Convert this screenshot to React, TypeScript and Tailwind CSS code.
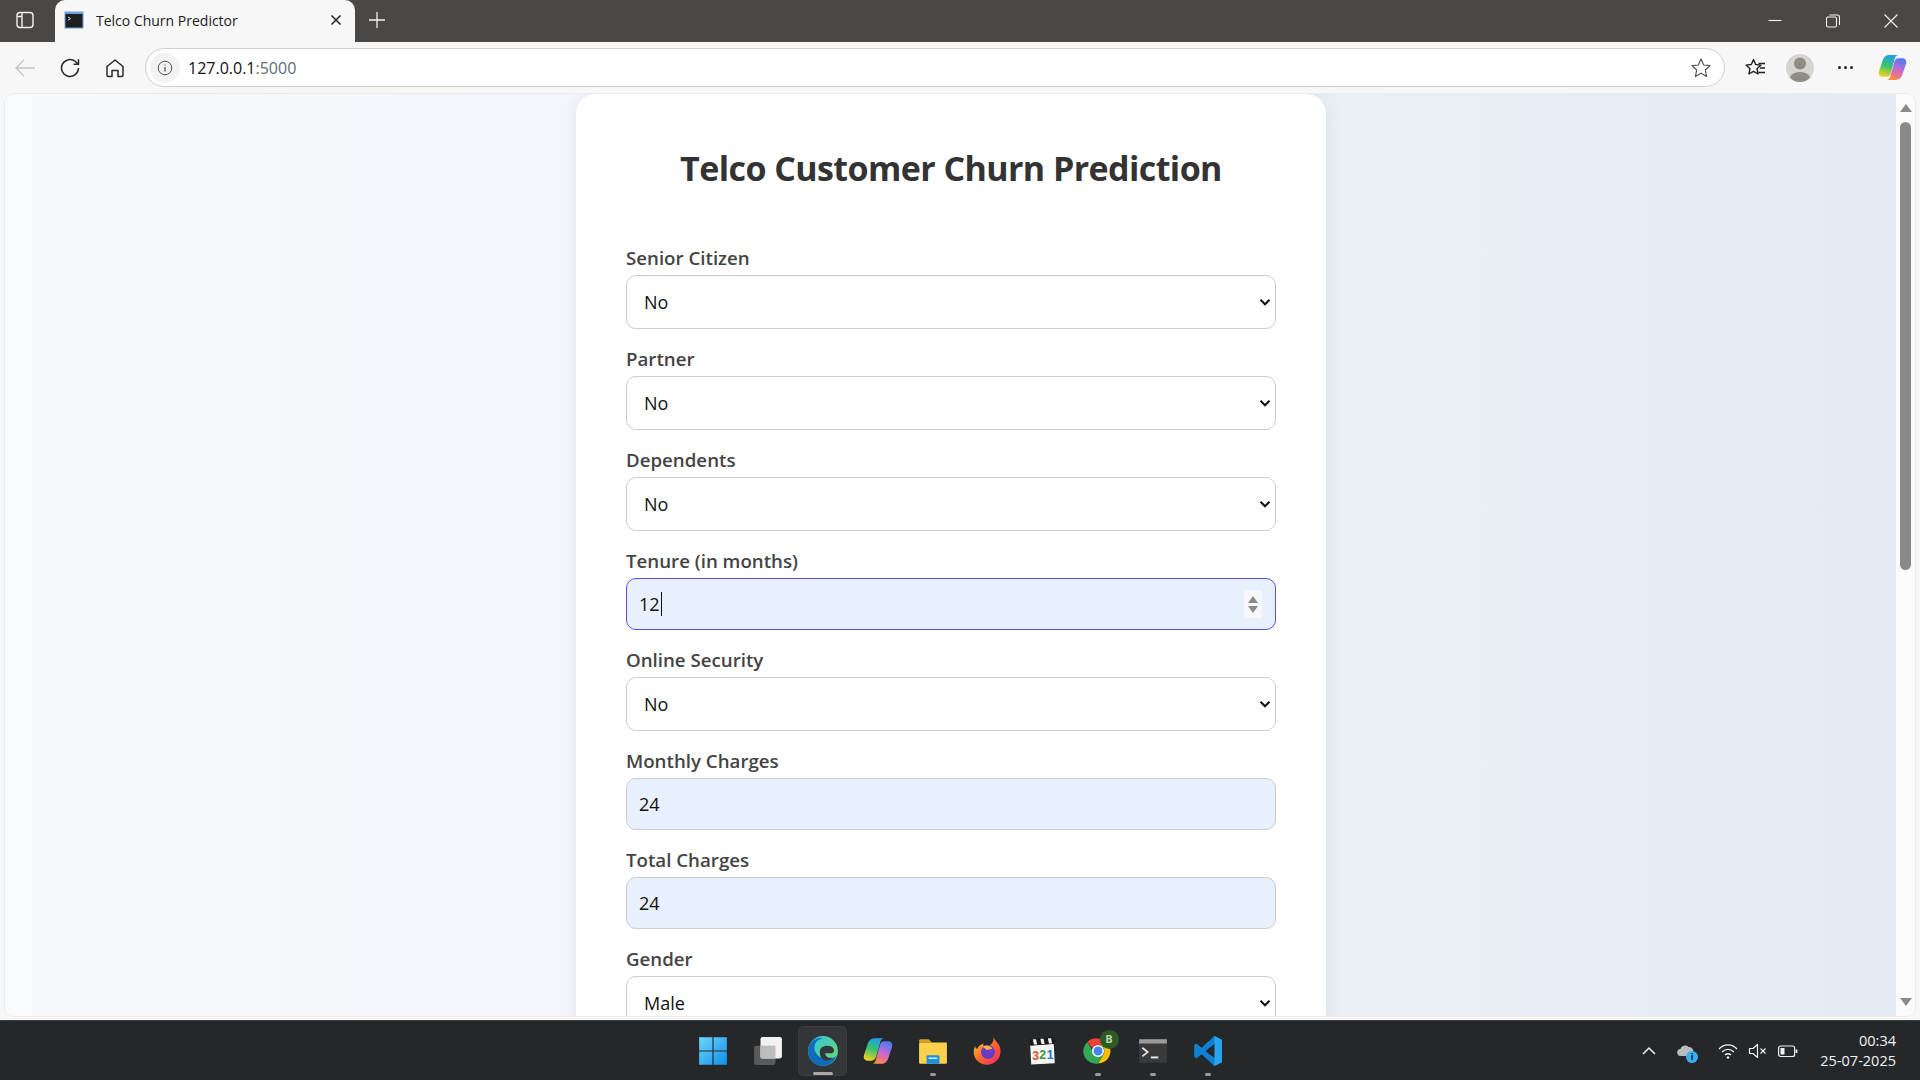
import { useId } from "react";

const uiFont = { fontFamily: '"Open Sans", "Noto Sans", sans-serif' };

function TabBar() {
  return (
    <div className="flex h-[42px] shrink-0 items-stretch bg-[#4a4846] text-white">
      <div className="flex w-[55px] items-center pb-[2px] pl-[15px]">
        <svg width="20" height="20" viewBox="0 0 20 20" fill="none" stroke="#f2f2f2" strokeWidth="1.4">
          <rect x="2" y="2.5" width="16" height="15" rx="3" />
          <path d="M7 3v14M2.500 6.500H7" />
        </svg>
      </div>
      <div className="relative flex w-[300px] items-center rounded-t-[10px] bg-[#f7f7f7] pb-[2px] pl-[9px] pr-[12px] text-[#222]">
        <svg width="20" height="20" viewBox="0 0 20 20">
          <rect x="0.5" y="1.5" width="19" height="17" fill="#6f9fd8" />
          <rect x="1.5" y="4" width="17" height="13.5" fill="#1d1f22" />
          <path d="M4 7l2.500 1.600L4 10.200" fill="none" stroke="#ddd" strokeWidth="1" />
        </svg>
        <span className="ml-3 text-[14px]" style={uiFont}>Telco Churn Predictor</span>
        <svg className="ml-auto" width="14" height="14" viewBox="0 0 14 14" stroke="#222" strokeWidth="1.5">
          <path d="M2.500 2.500l9 9M11.500 2.500l-9 9" />
        </svg>
      </div>
      <div className="ml-[13px] flex items-center pb-[2px]">
        <svg width="18" height="18" viewBox="0 0 18 18" stroke="#f2f2f2" strokeWidth="1.3">
          <path d="M9 1v16M1 9h16" />
        </svg>
      </div>
      <div className="ml-auto flex items-center pb-[1px] pr-[22px]">
        <svg width="14" height="14" viewBox="0 0 14 14" stroke="#f2f2f2" strokeWidth="1.1" className="mr-[44px]">
          <path d="M0.500 6.500h13" />
        </svg>
        <svg width="14" height="14" viewBox="0 0 14 14" fill="none" stroke="#f2f2f2" strokeWidth="1.1" className="mr-[44px]">
          <rect x="0.5" y="3" width="10" height="10" rx="1.5" />
          <path d="M3.500 1h8a2 2 0 0 1 2 2v8" />
        </svg>
        <svg width="14" height="14" viewBox="0 0 14 14" stroke="#f2f2f2" strokeWidth="1.1">
          <path d="M0.500 0.500l13 13M13.500 0.500l-13 13" />
        </svg>
      </div>
    </div>
  );
}

function AddressBar() {
  return (
    <div className="ml-[19px] flex h-[39px] w-[1580px] items-center rounded-full border border-[#cfcfcf] bg-white pl-[4px] pr-[12px]">
      <div className="flex h-[30px] w-[30px] items-center justify-center rounded-full bg-[#f2f2f2]">
        <svg width="16" height="16" viewBox="0 0 16 16" fill="none" stroke="#555" strokeWidth="1">
          <circle cx="8" cy="8" r="6.800" />
          <path d="M8 7v4.500M8 4.400v1.200" strokeWidth="1.3" />
        </svg>
      </div>
      <span className="ml-[8px] text-[16px] text-[#111]" style={uiFont}>
        127.0.0.1<span className="text-[#5f6b78]">:5000</span>
      </span>
      <svg className="ml-auto" width="22" height="22" viewBox="0 0 22 22" fill="none" stroke="#555" strokeWidth="1.2" strokeLinejoin="round">
        <path d="M11 2l2.700 6 6.300.7-4.700 4.300 1.300 6.500L11 16.200 5.400 19.500 6.700 13 2 8.700 8.300 8z" />
      </svg>
    </div>
  );
}

function CopilotLogo({ size }: { size: number }) {
  const id = useId();
  return (
    <svg width={size} height={size} viewBox="0 0 28 28">
      <defs>
        <linearGradient id={id + "a"} x1="0.6" y1="0" x2="0.3" y2="1">
          <stop offset="0" stopColor="#1f9df0" />
          <stop offset="0.5" stopColor="#35c46f" />
          <stop offset="1" stopColor="#f2d21f" />
        </linearGradient>
        <linearGradient id={id + "b"} x1="0.7" y1="0" x2="0.3" y2="1">
          <stop offset="0" stopColor="#4a7cf0" />
          <stop offset="0.4" stopColor="#b06be0" />
          <stop offset="0.75" stopColor="#f0708a" />
          <stop offset="1" stopColor="#f59a30" />
        </linearGradient>
      </defs>
      <path d="M11 2h9c-2 0-3.200 1.200-3.800 3.400L12.400 19c-.7 2.600-2.200 4-4.400 4H4.500C1.500 23 0 20.500 1 17.500L4.500 7C5.500 4 7.500 2 11 2z" fill={`url(#${id}a)`} />
      <path d="M17 26H8c2 0 3.200-1.200 3.800-3.400L15.600 9c.7-2.600 2.200-4 4.400-4h3.500c3 0 4.500 2.500 3.500 5.500L23.500 21c-1 3-3 5-6.500 5z" fill={`url(#${id}b)`} />
    </svg>
  );
}

function Toolbar() {
  return (
    <div className="flex h-[51px] shrink-0 items-center bg-[#f7f7f7]">
      <svg className="ml-[14px]" width="22" height="22" viewBox="0 0 22 22" fill="none" stroke="#c4c4c4" strokeWidth="1.3">
        <path d="M21 11H2M10 3l-8 8 8 8" />
      </svg>
      <svg className="ml-[22px]" width="24" height="24" viewBox="0 0 24 24" fill="none" stroke="#2a2a2a" strokeWidth="1.5">
        <path d="M20.500 12a8.500 8.500 0 1 1-3-6.500L20 8" />
        <path d="M20.500 3.200V8.300h-5" />
      </svg>
      <svg className="ml-[22px]" width="22" height="22" viewBox="0 0 22 22" fill="none" stroke="#2a2a2a" strokeWidth="1.5" strokeLinejoin="round">
        <path d="M3 9.500L11 3l8 6.500V18a1.500 1.500 0 0 1-1.500 1.500H14V13.500H8v6H4.500A1.500 1.500 0 0 1 3 18z" />
      </svg>
      <AddressBar />
      <svg className="ml-[19px]" width="22" height="22" viewBox="0 0 22 22" fill="none" stroke="#222" strokeWidth="1.4" strokeLinejoin="round">
        <path d="M9.500 2.500l2.200 5 5.300.6-4 3.600 1.100 5.300-4.600-2.700-4.600 2.700 1.100-5.300-4-3.600 5.300-.6z" />
        <path d="M14.500 6.500H21M16 11h5M14.500 15.500H21" />
      </svg>
      <div className="ml-[20px] flex h-[28px] w-[28px] items-end justify-center overflow-hidden rounded-full bg-[#d6d4cf]">
        <svg width="28" height="28" viewBox="0 0 28 28" fill="#8f8b85">
          <circle cx="14" cy="9.500" r="6" />
          <ellipse cx="14" cy="25" rx="10.500" ry="7" />
        </svg>
      </div>
      <div className="ml-[24px] flex gap-[3px]">
        <span className="h-[3px] w-[3px] rounded-full bg-[#222]" />
        <span className="h-[3px] w-[3px] rounded-full bg-[#222]" />
        <span className="h-[3px] w-[3px] rounded-full bg-[#222]" />
      </div>
      <div className="ml-[25px]">
        <CopilotLogo size={29} />
      </div>
    </div>
  );
}

function Chevron() {
  return (
    <svg width="12" height="12" viewBox="0 0 12 12" fill="none" stroke="#111" strokeWidth="2">
      <path d="M1.500 3.800L6 8.300l4.500-4.500" />
    </svg>
  );
}

function SelectField({ label, value }: { label: string; value: string }) {
  return (
    <div className="mb-[17px]">
      <label className="mb-[5px] block h-[25px] text-[18.7px] font-semibold leading-[25px] text-[#444]">{label}</label>
      <div className="flex h-[54px] items-center justify-between rounded-[10px] border border-[#ccc] bg-white pl-[17px] pr-[4px] text-[18px] text-[#111]">
        <span>{value}</span>
        <Chevron />
      </div>
    </div>
  );
}

function InputField({ label, value, focused }: { label: string; value: string; focused?: boolean }) {
  return (
    <div className="mb-[17px]">
      <label className="mb-[5px] block h-[25px] text-[18.7px] font-semibold leading-[25px] text-[#444]">{label}</label>
      <div
        className={
          focused
            ? "flex h-[52px] items-center justify-between rounded-[10px] border border-[#5a50e0] bg-[#e8f0fe] pl-[12px] pr-[13px] text-[18px] text-[#111]"
            : "flex h-[52px] items-center justify-between rounded-[10px] border border-[#ccc] bg-[#e8f0fe] pl-[12px] pr-[13px] text-[18px] text-[#111]"
        }
      >
        <span className="flex items-center">
          {value}
          {focused && <span className="ml-[1px] h-[24px] w-[1px] bg-[#111]" />}
        </span>
        {focused && (
          <span className="flex h-[28px] w-[18px] flex-col items-center justify-center gap-[3px] bg-[#f6f8fc]">
            <span className="h-0 w-0 border-x-[5px] border-b-[7px] border-x-transparent border-b-[#8a8a8a]" />
            <span className="h-0 w-0 border-x-[5px] border-t-[7px] border-x-transparent border-t-[#8a8a8a]" />
          </span>
        )}
      </div>
    </div>
  );
}

function Scrollbar() {
  return (
    <div className="flex w-[19px] shrink-0 flex-col items-center bg-[#fbfbfb] pt-[10px]">
      <span className="h-0 w-0 border-x-[6px] border-b-[8px] border-x-transparent border-b-[#8a8a8a]" />
      <span className="mt-[10px] h-[448px] w-[11px] rounded-full bg-[#8a8a8a]" />
      <span className="mt-auto mb-[10px] h-0 w-0 border-x-[6px] border-t-[8px] border-x-transparent border-t-[#8a8a8a]" />
    </div>
  );
}

function Page() {
  return (
    <div className="mx-[4px] flex min-h-0 flex-1 overflow-hidden rounded-[10px] border border-[#ececec]">
      <div className="flex min-w-0 flex-1 justify-center bg-[linear-gradient(90deg,#f8fafc,#e5ebf4)] pl-[1px]" style={uiFont}>
        <div className="h-[1400px] w-[750px] rounded-t-[20px] bg-white px-[50px] pt-[50px] shadow-[0_0_20px_rgba(0,0,0,0.07)]">
          <h1 className="mb-[51px] h-[50px] text-center text-[34px] font-bold leading-[48px] tracking-[-0.58px] text-[#333]">
            Telco Customer Churn Prediction
          </h1>
          <SelectField label="Senior Citizen" value="No" />
          <SelectField label="Partner" value="No" />
          <SelectField label="Dependents" value="No" />
          <InputField label="Tenure (in months)" value="12" focused />
          <SelectField label="Online Security" value="No" />
          <InputField label="Monthly Charges" value="24" />
          <InputField label="Total Charges" value="24" />
          <SelectField label="Gender" value="Male" />
        </div>
      </div>
      <Scrollbar />
    </div>
  );
}

function Slot({ children, dot, active }: { children: React.ReactNode; dot?: boolean; active?: boolean }) {
  return (
    <div className="relative flex h-[50px] w-[55px] items-center justify-center">
      {active && <span className="absolute inset-y-0 left-[3px] right-[3px] rounded-[5px] border border-[#3a3e41] bg-[#33373a]" />}
      <span className="relative flex items-center justify-center">{children}</span>
      {dot && <span className="absolute bottom-0 h-[3px] w-[6px] rounded-full bg-[#9a9a9a]" />}
      {active && <span className="absolute bottom-[1px] h-[3px] w-[20px] rounded-full bg-[#a8a8a8]" />}
    </div>
  );
}

function Taskbar() {
  return (
    <div className="mt-[3px] flex h-[60px] shrink-0 items-center border-t border-[#3a3e41] bg-[#24282b] pl-[685px] pr-[24px] text-white">
      <Slot>
        <svg width="30" height="30" viewBox="0 0 26 26">
          <defs>
            <linearGradient id="win" x1="0" y1="0" x2="1" y2="1">
              <stop offset="0" stopColor="#6fd6fb" />
              <stop offset="1" stopColor="#0f8fe8" />
            </linearGradient>
          </defs>
          <path d="M1 1h11.500v11.500H1zM13.500 1H25v11.500H13.500zM1 13.500h11.500V25H1zM13.500 13.500H25V25H13.500z" fill="url(#win)" />
        </svg>
      </Slot>
      <Slot>
        <svg width="30" height="30" viewBox="0 0 28 28">
          <rect x="1" y="9" width="20" height="18" rx="2" fill="#5a5a5a" />
          <rect x="7" y="1" width="20" height="20" rx="2" fill="#f2f2f2" />
          <rect x="7" y="9" width="14" height="12" fill="#bdbdbd" />
        </svg>
      </Slot>
      <Slot active>
        <svg width="32" height="32" viewBox="0 0 30 30">
          <defs>
            <linearGradient id="edgeA" x1="0" y1="0" x2="1" y2="1">
              <stop offset="0" stopColor="#2fc3e8" />
              <stop offset="1" stopColor="#6fdc5f" />
            </linearGradient>
          </defs>
          <circle cx="15" cy="15" r="14" fill="url(#edgeA)" />
          <path d="M1 15C1 7 8 2 15 3c-5 1-8 4-8 9 0 7 7 11 14 10 3 0 5-1 7-3-2 6-7 10-13 10C7 29 1 23 1 15z" fill="#0f6cbd" />
          <path d="M12 16c0-4 3-6 7-6 3 0 5 1 6 3 1 2 0 4-2 4h-6c0 3 3 5 7 4-2 3-5 3-7 3-3-1-5-4-5-8z" fill="#33373a" />
        </svg>
      </Slot>
      <Slot>
        <CopilotLogo size={30} />
      </Slot>
      <Slot dot>
        <svg width="30" height="30" viewBox="0 0 28 28">
          <path d="M1 4.500C1 3.500 1.800 3 2.500 3H10l3 3h-12z" fill="#d9a21b" />
          <rect x="1" y="6" width="26" height="20" rx="1" fill="#fbd04d" />
          <rect x="8" y="18" width="12" height="8" rx="1" fill="#1c8fe0" />
          <rect x="10" y="20" width="8" height="1.500" fill="#cdeafc" />
        </svg>
      </Slot>
      <Slot>
        <svg width="30" height="30" viewBox="0 0 28 28">
          <defs>
            <linearGradient id="fox" x1="0" y1="0" x2="1" y2="1">
              <stop offset="0" stopColor="#ffcb2e" />
              <stop offset="0.5" stopColor="#ff6a2b" />
              <stop offset="1" stopColor="#e8206b" />
            </linearGradient>
          </defs>
          <path d="M19 1c1 3 3 4 5 7 3 5 2 12-2 15-5 5-13 5-18 0C0 19 0 13 2 9c0 2 1 3 2 3 1-3 4-4 6-5-1 2 0 3 2 3 4 0 8-4 7-9z" fill="url(#fox)" />
          <circle cx="14" cy="15" r="6.500" fill="#6a3bc8" />
          <path d="M9 10c3-2 7-1 9 2l-5 1z" fill="#ffb03a" />
        </svg>
      </Slot>
      <Slot>
        <svg width="29" height="30" viewBox="0 0 26 28">
          <rect x="2" y="8" width="22" height="18" fill="#f4f4f4" transform="rotate(-3 13 17)" />
          <path d="M1 3l23-2 1 6-23 2z" fill="#1b1b1b" />
          <path d="M4 3l3 0 1 5-3 0zM11 2.500l3 0 1 5-3 0zM18 2l3 0 1 5-3 0z" fill="#f0f0f0" />
          <text x="3.500" y="22" fontSize="11.500" fontWeight="700" fontFamily="Liberation Sans, sans-serif" fill="#d9532c">3</text>
          <text x="10" y="21.500" fontSize="11.500" fontWeight="700" fontFamily="Liberation Sans, sans-serif" fill="#3d9440">2</text>
          <text x="17" y="21" fontSize="11.500" fontWeight="700" fontFamily="Liberation Sans, sans-serif" fill="#2a6fc9">1</text>
        </svg>
      </Slot>
      <Slot dot>
        <div className="relative">
          <svg width="30" height="30" viewBox="0 0 48 48">
            <path d="M24 4a20 20 0 0 1 17.300 10H24a10 10 0 0 0-9 5.700L7 9.500A20 20 0 0 1 24 4z" fill="#ea4335" />
            <path d="M41.300 14a20 20 0 0 1-17.300 30l8.700-15A10 10 0 0 0 24 14z" fill="#fbbc05" />
            <path d="M7 9.500l8.700 15A10 10 0 0 0 32.700 29L24 44A20 20 0 0 1 7 9.500z" fill="#34a853" />
            <circle cx="24" cy="24" r="8.500" fill="#4285f4" stroke="#fff" strokeWidth="2.500" />
          </svg>
          <span className="absolute -right-[6px] -top-[6px] flex h-[19px] w-[19px] items-center justify-center rounded-full bg-[#2f5a24] text-[11px] font-bold text-[#b9d7a8]" style={uiFont}>
            B
          </span>
        </div>
      </Slot>
      <Slot dot>
        <svg width="30" height="26" viewBox="0 0 28 24">
          <rect x="1" y="1" width="26" height="22" rx="1.500" fill="#3a3a3a" />
          <rect x="1" y="1" width="26" height="4" fill="#9a9a9a" />
          <path d="M4 9l5 4-5 4" fill="none" stroke="#e8e8e8" strokeWidth="1.600" />
          <path d="M12 18h7" stroke="#e8e8e8" strokeWidth="1.800" />
        </svg>
      </Slot>
      <Slot dot>
        <svg width="30" height="32" viewBox="0 0 28 30">
          <path d="M20 1l7 3.500v21L20 29 8 18l-5 4-2-1.500V9.500L3 8l5 4z" fill="#0f7fd4" />
          <path d="M20 1l7 3.500v21L20 29z" fill="#2aa4f0" />
          <path d="M20 8.500L11.500 15l8.500 6.500z" fill="#24282b" />
        </svg>
      </Slot>

      <div className="ml-auto flex items-center">
        <svg width="16" height="16" viewBox="0 0 16 16" fill="none" stroke="#f0f0f0" strokeWidth="1.500">
          <path d="M2 11l6-6 6 6" />
        </svg>
        <div className="relative ml-[20px] h-[20px] w-[20px]">
          <svg width="20" height="20" viewBox="0 0 20 20" fill="#b9bcbf">
            <path d="M4 15a3.500 3.500 0 0 1-.5-7C4.500 4.500 9 3.500 11.500 6 15 6 17 8.500 16 12v3z" />
          </svg>
          <span className="absolute -bottom-[2px] -right-[1px] flex h-[12px] w-[12px] items-center justify-center rounded-full bg-[#37b0f0] text-[9px] font-bold leading-none text-[#111]" style={uiFont}>
            i
          </span>
        </div>
        <svg className="ml-[21px]" width="20" height="20" viewBox="0 0 20 20" fill="none" stroke="#f0f0f0" strokeWidth="1.300">
          <path d="M1 8c5-5.500 13-5.500 18 0M4 11c3.500-3.500 8.500-3.500 12 0M7 14c2-1.700 4-1.700 6 0" />
          <circle cx="10" cy="16.500" r="1.200" fill="#f0f0f0" stroke="none" />
        </svg>
        <svg className="ml-[10px]" width="20" height="20" viewBox="0 0 20 20" fill="none" stroke="#f0f0f0" strokeWidth="1.200" strokeLinejoin="round">
          <path d="M1.500 7.500H5L9.500 3.500v13L5 12.500H1.500z" />
          <path d="M12.500 7.500l5 5M17.500 7.500l-5 5" />
        </svg>
        <svg className="ml-[10px]" width="20" height="20" viewBox="0 0 20 20" fill="none" stroke="#f0f0f0" strokeWidth="1.200">
          <rect x="0.600" y="5" width="16" height="10.500" rx="2" />
          <rect x="2.500" y="7" width="4" height="6.500" fill="#f0f0f0" stroke="none" />
          <path d="M18.500 8.500v3.500" strokeWidth="1.800" />
        </svg>
        <div className="ml-[20px] w-[78px] whitespace-nowrap text-right text-[14.5px] leading-[20px] text-[#f2f2f2]" style={uiFont}>
          <div>00:34</div>
          <div>25-07-2025</div>
        </div>
      </div>
    </div>
  );
}

export default function App() {
  return (
    <div className="flex h-[1080px] w-[1920px] flex-col overflow-hidden bg-[#f7f7f7]">
      <TabBar />
      <Toolbar />
      <Page />
      <Taskbar />
    </div>
  );
}
